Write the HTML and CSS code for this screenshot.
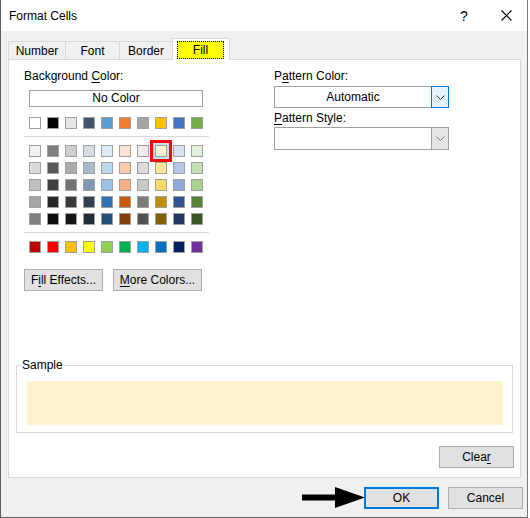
FILE: index.html
```html
<!DOCTYPE html>
<html>
  <head>
    <meta charset="utf-8" />
    <title>Format Cells</title>
    <link rel="stylesheet" href="styles.css">
  </head>
  <body>
    <div class="dialog">
      <div class="titlebar">
        <span class="title">Format Cells</span>
        <span class="caption-btn help">?</span>
        <span class="caption-btn close">
          <svg width="11" height="11" viewBox="0 0 11 11"><path d="M0.5 0.5 L10.5 10.5 M10.5 0.5 L0.5 10.5" stroke="#000" stroke-width="1.1" fill="none"/></svg>
        </span>
      </div>

      <div class="tabs">
        <div class="tab tab-number">Number</div>
        <div class="tab tab-font">Font</div>
        <div class="tab tab-border">Border</div>
        <div class="tab tab-active"><span class="focus">Fill</span></div>
      </div>

      <div class="panel">
        <div class="top">
          <div class="bg-col">
            <div class="label">Background <u>C</u>olor:</div>
            <div class="no-color">No Color</div>

            <div class="swatch-row">
              <span class="swatch" style="background:#ffffff"></span>
              <span class="swatch" style="background:#000000"></span>
              <span class="swatch" style="background:#e7e6e6"></span>
              <span class="swatch" style="background:#44546a"></span>
              <span class="swatch" style="background:#5b9bd5"></span>
              <span class="swatch" style="background:#ed7d31"></span>
              <span class="swatch" style="background:#a5a5a5"></span>
              <span class="swatch" style="background:#ffc000"></span>
              <span class="swatch" style="background:#4472c4"></span>
              <span class="swatch" style="background:#70ad47"></span>
            </div>
            <div class="sep"></div>

            <div class="swatch-grid">
              <span class="swatch" style="background:#f2f2f2"></span>
              <span class="swatch" style="background:#7f7f7f"></span>
              <span class="swatch" style="background:#d0cece"></span>
              <span class="swatch" style="background:#d6dce4"></span>
              <span class="swatch" style="background:#ddebf7"></span>
              <span class="swatch" style="background:#fce4d6"></span>
              <span class="swatch" style="background:#ededed"></span>
              <span class="swatch selected" style="background:#fff2cc"></span>
              <span class="swatch" style="background:#d9e1f2"></span>
              <span class="swatch" style="background:#e2efda"></span>

              <span class="swatch" style="background:#d9d9d9"></span>
              <span class="swatch" style="background:#595959"></span>
              <span class="swatch" style="background:#aeaaaa"></span>
              <span class="swatch" style="background:#acb9ca"></span>
              <span class="swatch" style="background:#bdd7ee"></span>
              <span class="swatch" style="background:#f8cbad"></span>
              <span class="swatch" style="background:#dbdbdb"></span>
              <span class="swatch" style="background:#ffe699"></span>
              <span class="swatch" style="background:#b4c6e7"></span>
              <span class="swatch" style="background:#c6e0b4"></span>

              <span class="swatch" style="background:#bfbfbf"></span>
              <span class="swatch" style="background:#404040"></span>
              <span class="swatch" style="background:#757171"></span>
              <span class="swatch" style="background:#8497b0"></span>
              <span class="swatch" style="background:#9bc2e6"></span>
              <span class="swatch" style="background:#f4b084"></span>
              <span class="swatch" style="background:#c9c9c9"></span>
              <span class="swatch" style="background:#ffd966"></span>
              <span class="swatch" style="background:#8ea9db"></span>
              <span class="swatch" style="background:#a9d08e"></span>

              <span class="swatch" style="background:#a6a6a6"></span>
              <span class="swatch" style="background:#262626"></span>
              <span class="swatch" style="background:#3a3838"></span>
              <span class="swatch" style="background:#333f4f"></span>
              <span class="swatch" style="background:#2f75b5"></span>
              <span class="swatch" style="background:#c65911"></span>
              <span class="swatch" style="background:#7b7b7b"></span>
              <span class="swatch" style="background:#bf8f00"></span>
              <span class="swatch" style="background:#305496"></span>
              <span class="swatch" style="background:#548235"></span>

              <span class="swatch" style="background:#808080"></span>
              <span class="swatch" style="background:#0d0d0d"></span>
              <span class="swatch" style="background:#171616"></span>
              <span class="swatch" style="background:#222b35"></span>
              <span class="swatch" style="background:#1f4e78"></span>
              <span class="swatch" style="background:#833c0c"></span>
              <span class="swatch" style="background:#525252"></span>
              <span class="swatch" style="background:#806000"></span>
              <span class="swatch" style="background:#203764"></span>
              <span class="swatch" style="background:#375623"></span>
            </div>
            <div class="sep"></div>

            <div class="swatch-row std-row">
              <span class="swatch" style="background:#c00000"></span>
              <span class="swatch" style="background:#ff0000"></span>
              <span class="swatch" style="background:#ffc000"></span>
              <span class="swatch" style="background:#ffff00"></span>
              <span class="swatch" style="background:#92d050"></span>
              <span class="swatch" style="background:#00b050"></span>
              <span class="swatch" style="background:#00b0f0"></span>
              <span class="swatch" style="background:#0070c0"></span>
              <span class="swatch" style="background:#002060"></span>
              <span class="swatch" style="background:#7030a0"></span>
            </div>

            <div class="btn-row">
              <div class="btn fill-effects">F<u>i</u>ll Effects...</div>
              <div class="btn more-colors"><u>M</u>ore Colors...</div>
            </div>
          </div>

          <div class="pattern-col">
            <div class="label">P<u>a</u>ttern Color:</div>
            <div class="combo">
              <div class="combo-field">Automatic</div>
              <div class="combo-arrow focused">
                <svg width="9" height="5" viewBox="0 0 9 5"><polyline points="0.5,0.5 4.5,4.5 8.5,0.5" fill="none" stroke="#333" stroke-width="1"/></svg>
              </div>
            </div>
            <div class="label style-label"><u>P</u>attern Style:</div>
            <div class="combo combo-style">
              <div class="combo-field"></div>
              <div class="combo-arrow">
                <svg width="9" height="5" viewBox="0 0 9 5"><polyline points="0.5,0.5 4.5,4.5 8.5,0.5" fill="none" stroke="#7a7a7a" stroke-width="1"/></svg>
              </div>
            </div>
          </div>
        </div>

        <fieldset class="sample">
          <legend>Sample</legend>
          <div class="sample-fill"></div>
        </fieldset>

        <div class="btn clear">Clea<u>r</u></div>
      </div>

      <div class="footer">
        <div class="btn ok">OK</div>
        <div class="btn">Cancel</div>
      </div>

      <svg class="arrow" width="66" height="25" viewBox="0 0 66 25">
        <polygon points="1,9.5 34,9.5 34,2 64,12.5 34,23 34,15.5 1,15.5" fill="#000"/>
      </svg>
    </div>
  </body>
</html>
```
FILE: styles.css
```css
body {
  margin: 0;
  background: #fff;
  font-family: "Liberation Sans", Arial, sans-serif;
  font-size: 12px;
  color: #000;
}
u {
  text-decoration-thickness: 1px;
  text-underline-offset: 2px;
}
.dialog {
  position: relative;
  width: 528px;
  height: 518px;
  box-sizing: border-box;
  border-left: 1px solid #5e5e5e;
  border-right: 1px solid #7a7a7a;
  border-bottom: 1px solid #5e5e5e;
  background: #f0f0f0;
  display: flex;
  flex-direction: column;
}
.titlebar {
  height: 31px;
  flex: none;
  background: #fff;
  display: flex;
  align-items: center;
}
.title {
  flex: 1;
  padding-left: 8px;
}
.caption-btn {
  width: 42px;
  height: 31px;
  display: flex;
  align-items: center;
  justify-content: center;
}
.help {
  font-size: 14px;
}

/* tabs */
.tabs {
  display: flex;
  align-items: flex-end;
  height: 21px;
  flex: none;
  margin: 7px 0 0 7px;
}
.tab {
  box-sizing: border-box;
  height: 18px;
  padding-top: 1px;
  line-height: 16px;
  text-align: center;
  border: 1px solid #d9d9d9;
  border-bottom: none;
  background: #f0f0f0;
  margin-left: -1px;
}
.tab-number { width: 58px; margin-left: 0; }
.tab-font { width: 55px; }
.tab-border { width: 54px; }
.tab-active {
  position: relative;
  z-index: 1;
  width: 58px;
  height: 22px;
  margin-bottom: -1px;
  padding: 2px 0 0 4px;
  background: #fff;
  text-align: left;
}
.focus {
  display: block;
  box-sizing: border-box;
  width: 47px;
  height: 18px;
  line-height: 16px;
  text-align: center;
  background: #ffff00;
  border: 1px dotted #000;
}

/* panel */
.panel {
  box-sizing: border-box;
  height: 419px;
  flex: none;
  margin: 0 6px 0 7px;
  border: 1px solid #d9d9d9;
  background: #fff;
  display: flex;
  flex-direction: column;
}
.top {
  display: flex;
  padding: 8px 0 0 15px;
}
.bg-col {
  width: 185px;
}
.pattern-col {
  margin-left: 65px;
}
.label {
  line-height: 16px;
  white-space: nowrap;
}
.no-color {
  box-sizing: border-box;
  width: 174px;
  height: 17px;
  margin: 6px 0 0 5px;
  line-height: 15px;
  text-align: center;
  border: 1px solid #a0a0a0;
}
.swatch-row {
  display: flex;
  gap: 6px;
  margin: 10px 0 0 5px;
}
.swatch {
  display: block;
  box-sizing: border-box;
  width: 12px;
  height: 12px;
  border: 1px solid #a0a0a0;
}
.selected {
  position: relative;
  z-index: 1;
  box-shadow: 0 0 0 2px #c4e1f8, 0 0 0 5px #ff0000;
}
.sep {
  height: 1px;
  margin-top: 7px;
  background: #d9d9d9;
}
.swatch-grid {
  display: grid;
  grid-template-columns: repeat(10, 12px);
  column-gap: 6px;
  row-gap: 5px;
  margin: 8px 0 0 5px;
}
.std-row {
  margin-top: 8px;
}
.btn-row {
  display: flex;
  gap: 10px;
  margin-top: 16px;
}
.btn {
  box-sizing: border-box;
  width: 75px;
  height: 22px;
  line-height: 20px;
  text-align: center;
  background: #e1e1e1;
  border: 1px solid #adadad;
  white-space: nowrap;
}
.fill-effects { width: 79px; }
.more-colors { width: 89px; }

/* pattern combos */
.combo {
  display: flex;
  width: 175px;
  height: 22px;
  margin-top: 2px;
}
.combo-field {
  flex: 1;
  box-sizing: border-box;
  border: 1px solid #a0a0a0;
  border-right: none;
  line-height: 20px;
  text-align: center;
}
.combo-arrow {
  box-sizing: border-box;
  width: 18px;
  border: 1px solid #a0a0a0;
  background: #e5e5e5;
  display: flex;
  align-items: center;
  justify-content: center;
}
.combo-arrow.focused {
  border-color: #0078d7;
  background: #e5f1fb;
}
.style-label {
  margin-top: 2px;
}
.combo-style {
  height: 23px;
  margin-top: 1px;
}

/* sample */
.sample {
  margin: auto 7px 0 7px;
  padding: 8px 9px 7px 10px;
  border: 1px solid #d9d9d9;
  min-width: 0;
}
.sample legend {
  padding: 0 1px;
  margin-left: -6px;
  line-height: 16px;
}
.sample-fill {
  height: 44px;
  background: #fff2cc;
}
.clear {
  margin: 13px 6px 9px auto;
}

/* footer */
.footer {
  display: flex;
  justify-content: flex-end;
  gap: 9px;
  margin-top: 9px;
  padding-right: 4px;
}
.ok {
  border: 2px solid #0078d7;
  line-height: 18px;
}
.arrow {
  position: absolute;
  left: 300px;
  top: 485px;
}
```
